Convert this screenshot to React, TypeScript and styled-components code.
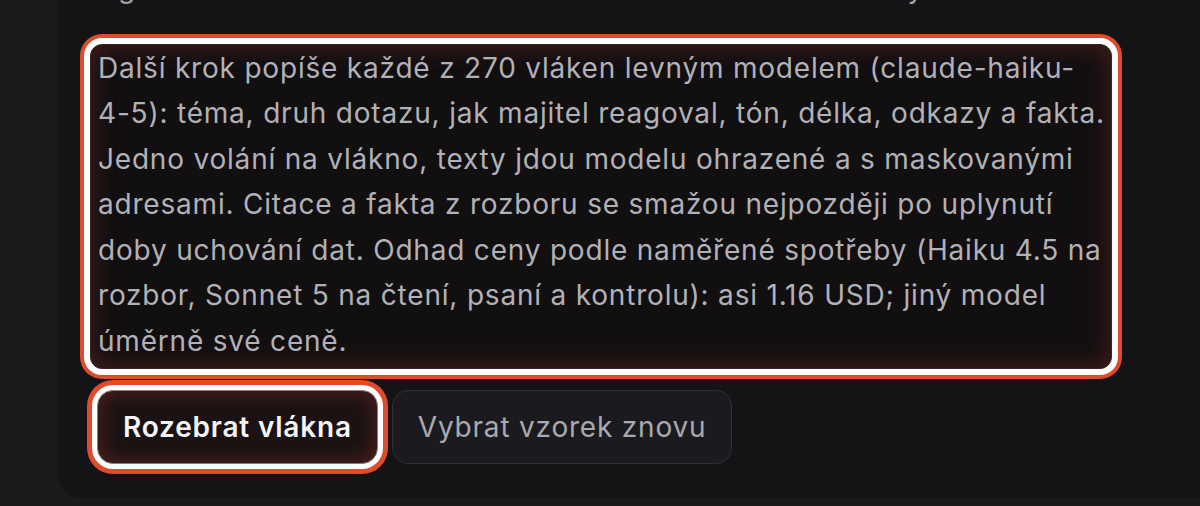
import React from "react";
import styled, { createGlobalStyle } from "styled-components";

const GlobalStyle = createGlobalStyle`
  html, body {
    margin: 0;
    padding: 0;
    background: #1a1a1d;
    overflow: hidden;
  }
  body {
    font-family: Inter, "Noto Sans", "Liberation Sans", sans-serif;
    -webkit-font-smoothing: antialiased;
  }
  * { box-sizing: border-box; }
`;

const Shell = styled.div`
  display: flex;
  height: 506px;
  padding-left: 58px;
  overflow: hidden;
`;

const Panel = styled.section`
  flex: 1;
  align-self: flex-start;
  margin-top: -34px;
  padding: 0 32px 34px;
  background: #141417;
  border-radius: 0 0 0 24px;
`;

const Content = styled.div`
  display: flex;
  flex-direction: column;
  max-width: 1022px;
`;

const Description = styled.p`
  margin: 0 0 32px;
  font-size: 28px;
  line-height: 45.5px;
  letter-spacing: 0.9px;
  color: #a1a1a8;
  white-space: nowrap;
`;

const Field = styled.textarea`
  display: block;
  width: 100%;
  height: 325px;
  margin: 0;
  padding: 1px 1px 1px 7px;
  border: 1px solid #3a2522;
  border-radius: 12px;
  background: #120f11;
  color: #b1b1b7;
  font-family: inherit;
  font-size: 28px;
  line-height: 45.5px;
  letter-spacing: 0.8px;
  resize: none;
  overflow: hidden;
  outline: none;
  box-shadow:
    0 0 0 6px #ffffff,
    0 0 0 10px #e04a2d,
    inset 0 0 26px rgba(214, 72, 46, 0.28);
`;

const Actions = styled.div`
  display: flex;
  align-items: center;
  gap: 14px;
  margin-top: 21px;
  padding-left: 7px;
`;

const Button = styled.button<{ $primary?: boolean }>`
  height: 74px;
  padding: 0 25px;
  border-radius: 16px;
  font-family: inherit;
  font-size: 28px;
  line-height: 1;
  letter-spacing: 0.8px;
  cursor: pointer;
  border: 1px solid ${(p) => (p.$primary ? "#8a7d7d" : "#2f2f35")};
  background: ${(p) => (p.$primary ? "#1a1213" : "#1b1b1f")};
  color: ${(p) => (p.$primary ? "#f5f5f7" : "#a9a9b0")};
  font-weight: ${(p) => (p.$primary ? 600 : 400)};
  box-shadow: ${(p) =>
    p.$primary
      ? "0 0 0 5px #ffffff, 0 0 0 10px #e04a2d, inset 0 0 22px rgba(214, 72, 46, 0.32)"
      : "none"};
`;

const text =
  "Další krok popíše každé z 270 vláken levným modelem (claude-haiku-4-\u20605): téma, druh dotazu, jak majitel reagoval, tón, délka, odkazy a fakta. Jedno volání na vlákno, texty jdou modelu ohrazené a s maskovanými adresami. Citace a fakta z rozboru se smažou nejpozději po uplynutí doby uchování dat. Odhad ceny podle naměřené spotřeby (Haiku 4.5 na rozbor, Sonnet 5 na čtení, psaní a kontrolu): asi 1.16 USD; jiný model úměrně své ceně.";

export default function App() {
  return (
    <>
      <GlobalStyle />
      <Shell>
        <Panel>
          <Content>
            <Description>
              Algoritmus náhodně zvolil 270 vláken z té sdílené schránky.
            </Description>
            <Field readOnly defaultValue={text} spellCheck={false} />
            <Actions>
              <Button $primary>Rozebrat vlákna</Button>
              <Button>Vybrat vzorek znovu</Button>
            </Actions>
          </Content>
        </Panel>
      </Shell>
    </>
  );
}
